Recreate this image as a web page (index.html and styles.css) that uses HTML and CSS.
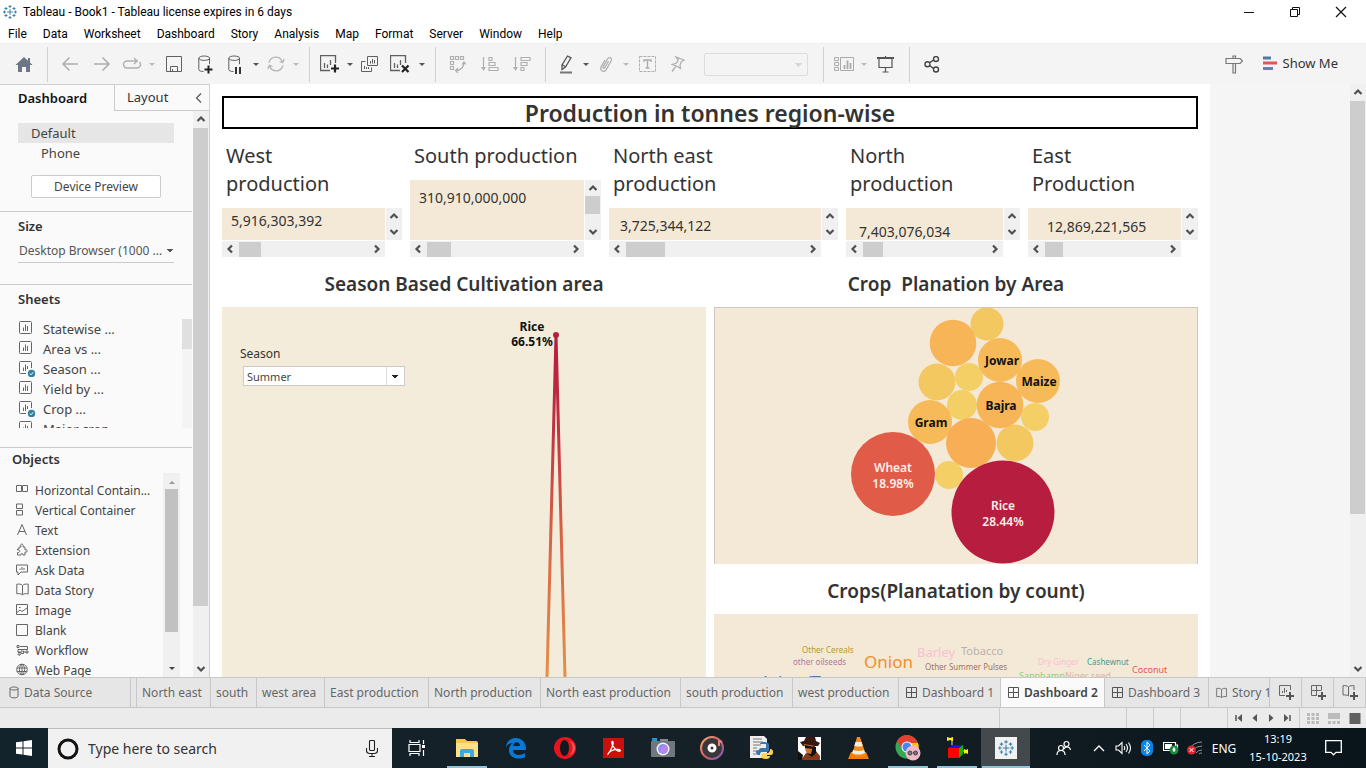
FILE: index.html
```html
<!DOCTYPE html>
<html lang="en">
<head>
<meta charset="utf-8">
<title>Tableau - Book1</title>
<link rel="stylesheet" href="styles.css">
</head>
<body>
<svg class="defs" aria-hidden="true">
  <symbol id="tableau" viewBox="0 0 16 16"><path d="M8 5v6M5 8h6M8 1v3M6.500 2.500h3M8 12v3M6.500 13.500h3M1 8h3M2.500 6.500v3M12 8h3M13.500 6.500v3M4 3v3M2.500 4.500h3M12 3v3M10.500 4.500h3M4 10v3M2.500 11.500h3M12 10v3M10.500 11.500h3" fill="none" stroke="#3f82aa"/></symbol>
  <symbol id="caret" viewBox="0 0 8 4"><path d="M0 0h8L4 4z" fill="currentColor"/></symbol>
  <symbol id="up" viewBox="0 0 10 8"><path d="M1.500 6L5 2.500 8.500 6" fill="none" stroke="#505050" stroke-width="2.200"/></symbol>
  <symbol id="down" viewBox="0 0 10 8"><path d="M1.500 2L5 5.500 8.500 2" fill="none" stroke="#505050" stroke-width="2.200"/></symbol>
  <symbol id="left" viewBox="0 0 8 10"><path d="M6 1.500L2.500 5 6 8.500" fill="none" stroke="#505050" stroke-width="2.200"/></symbol>
  <symbol id="right" viewBox="0 0 8 10"><path d="M2 1.500L5.500 5 2 8.500" fill="none" stroke="#505050" stroke-width="2.200"/></symbol>
  <symbol id="sheet" viewBox="0 0 14 14"><rect x=".5" y=".5" width="12" height="12" rx="1" fill="none" stroke="#666"/><path d="M4.500 6.500V10M6.500 3.500V10M8.500 5v5" stroke="#666" fill="none"/></symbol>
  <symbol id="sheetused" viewBox="0 0 18 17"><path d="M7 12.500H1.500a1 1 0 0 1-1-1V1.500a1 1 0 0 1 1-1h10a1 1 0 0 1 1 1V7M4.500 6.500V10M6.500 3.500V10M8.500 5v3" stroke="#666" fill="none"/><circle cx="12.500" cy="12.500" r="3.700" fill="#2f7f9f"/><path d="M10.700 12.500l1.300 1.300 2.300-2.600" fill="none" stroke="#fff"/></symbol>
  <symbol id="grid" viewBox="0 0 12 12"><path d="M.5 .5h10v10H.5zM5.500 .5v10M.5 5.500h10" fill="none" stroke="#555"/></symbol>
  <symbol id="book" viewBox="0 0 14 13"><path d="M6.500 2.500C5 .8 3 1 .8 1.200v9.600c2-.3 4-.4 5.700 1 1.700-1.400 3.700-1.300 5.700-1V1.200C10 1 8 .8 6.500 2.500zm0 0v9" fill="none" stroke="#666"/></symbol>
  <symbol id="db" viewBox="0 0 17 19"><path d="M.8 3.200v11.500c0 1 2 1.800 4.700 1.800M11.500 3.200v6" fill="none" stroke="#606060"/><ellipse cx="6.200" cy="3.200" rx="5.400" ry="2.200" fill="none" stroke="#606060"/></symbol>
  <symbol id="bars" viewBox="0 0 17 17"><path d="M10 15.500H.5V.5h15V8M4.500 8v5M7.500 9.500V13M10.500 5v5" fill="none" stroke="#606060" stroke-width="1.300"/></symbol>
</svg>

<div class="window">
  <header class="titlebar">
    <svg class="s16" aria-hidden="true"><use href="#tableau"/></svg>
    <h1>Tableau - Book1 - Tableau license expires in 6 days</h1>
    <button class="winbtn" aria-label="Minimize"><svg width="12" height="12"><path d="M1 6.500h10" stroke="#111"/></svg></button>
    <button class="winbtn" aria-label="Restore"><svg width="12" height="12"><path d="M1.500 3.500h7v7h-7zM3.500 3.500v-2h7v7h-2" fill="none" stroke="#111"/></svg></button>
    <button class="winbtn" aria-label="Close"><svg width="12" height="12"><path d="M1 1l10 10M11 1L1 11" stroke="#111" stroke-width="1.200"/></svg></button>
  </header>
  <nav class="menubar">
    <button>File</button><button>Data</button><button>Worksheet</button><button>Dashboard</button><button>Story</button><button>Analysis</button><button>Map</button><button>Format</button><button>Server</button><button>Window</button><button>Help</button>
  </nav>

  <div class="toolbar">
    <button class="tool home" aria-label="Home"><svg width="18" height="17"><path d="M9 1L.5 9H3v7h4v-5h4v5h4V9h2.500L15 6.500V2h-2v2.700z" fill="#6b7785"/></svg></button>
    <i class="sep"></i>
    <button class="tool" aria-label="Back"><svg width="18" height="16"><path d="M17 8H2M8.500 1.500L2 8l6.500 6.500" fill="none" stroke="#adadad" stroke-width="1.500"/></svg></button>
    <button class="tool" aria-label="Forward"><svg width="18" height="16"><path d="M1 8h15M9.500 1.500L16 8l-6.500 6.500" fill="none" stroke="#adadad" stroke-width="1.500"/></svg></button>
    <button class="tool narrow" aria-label="Replay"><svg width="20" height="14"><path d="M9 4H5a3.500 3.500 0 0 0 0 7h10a3.500 3.500 0 0 0 2.500-6M9 4h6M12 1l3.200 3L12 7" fill="none" stroke="#b0b0b0" stroke-width="1.400"/></svg></button>
    <button class="drop" aria-label="Replay options"><svg class="caret pale"><use href="#caret"/></svg></button>
    <button class="tool" aria-label="Save"><svg width="17" height="17"><path d="M.5 .5h15v15H.5zM4.500 15v-4.500h7V15M6.500 15v-2" fill="none" stroke="#606060"/></svg></button>
    <button class="tool" aria-label="New data source"><svg width="17" height="19"><use href="#db"/><path d="M6.500 14.500h8M10.500 10.500v8" stroke="#222" stroke-width="2"/></svg></button>
    <button class="tool narrow" aria-label="Pause updates"><svg width="17" height="19"><use href="#db"/><path d="M8 12v7M12 12v7" stroke="#333" stroke-width="2"/></svg></button>
    <button class="drop" aria-label="Update options"><svg class="caret"><use href="#caret"/></svg></button>
    <button class="tool narrow" aria-label="Refresh"><svg width="18" height="16"><path d="M2 6.500C4-.5 13-.5 15.500 6M16 9.500c-2 7-11 7-13.500.5M12.500 5.500l3.200 1.200L17.200 3M5.500 10.500L2.300 9.300.8 13" fill="none" stroke="#b5b5b5" stroke-width="1.300"/></svg></button>
    <button class="drop" aria-label="Refresh options"><svg class="caret pale"><use href="#caret"/></svg></button>
    <i class="sep"></i>
    <button class="tool narrow" aria-label="New worksheet"><svg width="20" height="19"><svg width="17" height="17"><use href="#bars"/></svg><path d="M11 13.500h8M15 9.500v8" stroke="#222" stroke-width="2.200"/></svg></button>
    <button class="drop" aria-label="New worksheet options"><svg class="caret"><use href="#caret"/></svg></button>
    <button class="tool narrow" aria-label="Duplicate"><svg width="18" height="17"><path d="M6.500 .5h10v9h-10zM4.500 5.500h-4v10h10v-4M9.500 5v2.500M11.500 3v4.500M13.500 4v3.500M3.500 10v3M5.500 11v2M7.500 11v2" fill="none" stroke="#606060"/></svg></button>
    <button class="tool" aria-label="Clear sheet"><svg width="20" height="19"><svg width="17" height="17"><use href="#bars"/></svg><path d="M12 10.500l6.500 6.500M18.500 10.500L12 17" stroke="#222" stroke-width="2.200"/></svg></button>
    <button class="drop" aria-label="Clear options"><svg class="caret"><use href="#caret"/></svg></button>
    <i class="sep"></i>
    <button class="tool" aria-label="Swap rows and columns"><svg width="18" height="18"><path d="M1.500 1.500h3v3h-3zM6.500 1.500h3v3h-3zM11.500 1.500h3v3h-3zM1.500 6.500h3v3h-3zM1.500 11.500h3v3h-3zM7 15.500c5 0 8-4 8-8M13 9.500l2-2.500 2 2.500M9 13l-2.500 2.500L9 18" fill="none" stroke="#b0b0b0" stroke-width="1.200"/></svg></button>
    <button class="tool" aria-label="Sort ascending"><svg width="18" height="16"><path d="M2.500 1v12M8 1.500h3v3H8zM8 6.500h6v3H8zM8 11.500h9v3H8z" fill="none" stroke="#b0b0b0" stroke-width="1.200"/><path d="M0 11h5l-2.500 4z" fill="#b0b0b0"/></svg></button>
    <button class="tool" aria-label="Sort descending"><svg width="18" height="16"><path d="M2.500 1v12M8 1.500h9v3H8zM8 6.500h6v3H8zM8 11.500h3v3H8z" fill="none" stroke="#b0b0b0" stroke-width="1.200"/><path d="M0 11h5l-2.500 4z" fill="#b0b0b0"/></svg></button>
    <i class="sep"></i>
    <button class="tool narrow" aria-label="Highlight"><svg width="14" height="19"><path d="M8.500 1L12 2.800 6.500 12 3 14.500V10zM3.500 10L7 12" fill="none" stroke="#555" stroke-width="1.300"/><path d="M1 17.500h12" stroke="#777" stroke-width="2"/></svg></button>
    <button class="drop" aria-label="Highlight options"><svg class="caret"><use href="#caret"/></svg></button>
    <button class="tool narrow" aria-label="Group"><svg width="14" height="17"><path d="M4 11l4.500-8c1.500-2.500 5-1 3.700 1.700l-5 9C5.500 17 .5 14.500 2 11l4-7M9.500 5L6 11.500c-.7 1.500-2.500.5-1.800-1L7 5.500" fill="none" stroke="#b0b0b0" stroke-width="1.300"/></svg></button>
    <button class="drop" aria-label="Group options"><svg class="caret pale"><use href="#caret"/></svg></button>
    <button class="tool" aria-label="Show mark labels"><svg width="18" height="17"><path d="M.5 .5h16v15H.5z" fill="none" stroke="#b0b0b0" stroke-dasharray="3 1"/><path d="M5 6V4h7v2M8.500 4v8M6.500 12h4" fill="none" stroke="#aaa" stroke-width="1.300"/></svg></button>
    <button class="tool narrow" aria-label="Fix axes"><svg width="14" height="17"><path d="M5 1l8 3-2.500 1.500L9 9l.5 3.500L5.500 10 1.500 8.500 5.500 7l1.700-3zM5.500 9.500L1 15.500" fill="none" stroke="#b0b0b0" stroke-width="1.300"/></svg></button>
    <select class="fit" aria-label="Fit" disabled><option></option></select>
    <i class="sep"></i>
    <button class="tool narrow" aria-label="Show or hide cards"><svg width="21" height="15"><path d="M.5 .5h4v3h-4zM.5 5.500h4v3h-4zM.5 10.500h4v3h-4zM6.500 .5h13v13h-13z" fill="none" stroke="#aaa"/><path d="M10.500 8v4M13.500 3.500V12M16.500 6v6" stroke="#aaa" stroke-width="1.800"/></svg></button>
    <button class="drop" aria-label="Card options"><svg class="caret pale"><use href="#caret"/></svg></button>
    <button class="tool" aria-label="Presentation mode"><svg width="18" height="17"><path d="M0 2h17" stroke="#555" stroke-width="2"/><path d="M2 3v8.500h13V3M8.500 0v2M8.500 12v4M5.500 16h6" fill="none" stroke="#555" stroke-width="1.200"/></svg></button>
    <i class="sep"></i>
    <button class="tool" aria-label="Share"><svg width="16" height="17"><path d="M5.500 7l4-3M5.500 9.500l4 3M9.500 3a2.500 2.500 0 1 0 5 0 2.500 2.500 0 0 0-5 0zM9.500 13.500a2.500 2.500 0 1 0 5 0 2.500 2.500 0 0 0-5 0zM1 8.300a2.500 2.500 0 1 0 5 0 2.500 2.500 0 0 0-5 0z" fill="none" stroke="#444" stroke-width="1.400"/></svg></button>
    <button class="tool guide" aria-label="Data guide"><svg width="19" height="19"><path d="M1 3.500h14l2.500 2.500-2.500 2.500H1zM8 8.500V18h2.500V8.500M8 3.500V1h2.500v2.500" fill="none" stroke="#777" stroke-width="1.200"/></svg></button>
    <button class="showme"><svg width="14" height="15" aria-hidden="true"><path d="M0 2h8" stroke="#4e79a7" stroke-width="3"/><path d="M0 7h14" stroke="#e15759" stroke-width="3"/><path d="M0 12.500h10" stroke="#6d7fae" stroke-width="3"/></svg>Show Me</button>
  </div>

  <main class="main">
    <aside class="side">
      <div class="sidetabs"><button class="on">Dashboard</button><button class="off">Layout <svg width="8" height="12" aria-hidden="true"><path d="M6 1.500L1.500 6 6 10.500" fill="none" stroke="#555" stroke-width="1.200"/></svg></button></div>
      <div class="sidebody">
        <div class="panels">
          <section class="devices">
            <button class="device picked">Default</button>
            <button class="device phone">Phone</button>
            <button class="preview">Device Preview</button>
          </section>
          <section class="size">
            <h2><label for="size">Size</label></h2>
            <select id="size"><option>Desktop Browser (1000 ...</option></select>
          </section>
          <section class="sheets">
            <h2>Sheets</h2>
            <div class="sheetrow">
              <ul>
                <li><svg class="sheeticon"><use href="#sheet" width="14" height="14"/></svg>Statewise ...</li>
                <li><svg class="sheeticon"><use href="#sheet" width="14" height="14"/></svg>Area vs ...</li>
                <li><svg class="sheeticon"><use href="#sheetused" width="18" height="17"/></svg>Season ...</li>
                <li><svg class="sheeticon"><use href="#sheet" width="14" height="14"/></svg>Yield by ...</li>
                <li><svg class="sheeticon"><use href="#sheetused" width="18" height="17"/></svg>Crop ...</li>
                <li><svg class="sheeticon"><use href="#sheet" width="14" height="14"/></svg>Major crop</li>
              </ul>
              <div class="thinbar"><i></i></div>
            </div>
          </section>
          <section class="objects">
            <h2>Objects</h2>
            <div class="objectrow">
              <ul>
                <li><svg><path d="M.5 2.500h5v6h-5zM6.500 2.500h5v6h-5z"/></svg>Horizontal Contain...</li>
                <li><svg><path d="M.5 1h6v4.500h-6zM.5 7.500h6V12h-6z"/></svg>Vertical Container</li>
                <li><svg><path d="M1.500 12L6 1.500 10.500 12M3 8.500h6"/></svg>Text</li>
                <li><svg><path d="M3 4h2C3.500 0 8 0 7 4h2v3c3-1.500 3 3 0 2v3H7c.5-2-2.500-2-2 0H1.500V9.500c3 .5 3-3 0-2.500V6H3z"/></svg>Extension</li>
                <li><svg><path d="M.5 2h11v7H5l-3 3V9H.5zM4 7V5.500M6 7V4M8 7V5"/></svg>Ask Data</li>
                <li><svg><use href="#book" width="14" height="13"/></svg>Data Story</li>
                <li><svg><path d="M.5 1.500h11v10H.5zM1 9.500l3-2.500 2 1.500L11 5M3 4.500h1.500"/></svg>Image</li>
                <li><svg><path d="M.5 1.500h11v11H.5z"/></svg>Blank</li>
                <li><svg><path d="M1 2.500h2v2H1zM4 3.500h7.500v3H2v3h3M5 8h2.500v2.500H5zM8 9h2M10 8h2v2h-2zM3 8v4M1.500 11L3 12.500 5 11"/></svg>Workflow</li>
                <li><svg><path d="M.7 6.500a5.300 5.300 0 1 0 10.600 0 5.300 5.300 0 0 0-10.600 0zM6 1v11M1 5h10M1 8.500h10M6 1C2.500 4 2.500 9 6 12M6 1c3.500 3 3.500 8 0 11"/></svg>Web Page</li>
              </ul>
              <div class="classicbar"><svg class="caret flip"><use href="#caret"/></svg><i></i><svg class="caret dark"><use href="#caret"/></svg></div>
            </div>
          </section>
        </div>
        <div class="vbar sidebar"><svg><use href="#up"/></svg><i></i><svg><use href="#down"/></svg></div>
      </div>
    </aside>

    <div class="canvas">
      <article class="dash">
        <h2 class="banner">Production in tonnes region-wise</h2>
        <div class="cards">
          <section class="card west"><h3>West<br>production</h3><div class="value"><p>5,916,303,392</p><div class="vbar"><svg><use href="#up"/></svg><svg><use href="#down"/></svg></div><div class="hbar"><svg><use href="#left"/></svg><i></i><svg><use href="#right"/></svg></div></div></section>
          <section class="card south"><h3>South production</h3><div class="value"><p>310,910,000,000</p><div class="vbar"><svg><use href="#up"/></svg><i></i><svg><use href="#down"/></svg></div><div class="hbar"><svg><use href="#left"/></svg><i></i><svg><use href="#right"/></svg></div></div></section>
          <section class="card northeast"><h3>North east<br>production</h3><div class="value"><p>3,725,344,122</p><div class="vbar"><svg><use href="#up"/></svg><svg><use href="#down"/></svg></div><div class="hbar"><svg><use href="#left"/></svg><i></i><svg><use href="#right"/></svg></div></div></section>
          <section class="card north"><h3>North<br>production</h3><div class="value"><p>7,403,076,034</p><div class="vbar"><svg><use href="#up"/></svg><svg><use href="#down"/></svg></div><div class="hbar"><svg><use href="#left"/></svg><i></i><svg><use href="#right"/></svg></div></div></section>
          <section class="card east"><h3>East<br>Production</h3><div class="value"><p>12,869,221,565</p><div class="vbar"><svg><use href="#up"/></svg><svg><use href="#down"/></svg></div><div class="hbar"><svg><use href="#left"/></svg><i></i><svg><use href="#right"/></svg></div></div></section>
        </div>
        <div class="charts">
          <section class="chart">
            <h3>Season Based Cultivation area</h3>
            <div class="plot season">
              <svg class="draw" viewBox="0 0 484 370" preserveAspectRatio="xMidYMin meet" role="img" aria-label="Cultivation share by crop">
                <defs><linearGradient id="heat" gradientUnits="userSpaceOnUse" x1="0" y1="28" x2="0" y2="370"><stop offset="0" stop-color="#b71d3e"/><stop offset=".25" stop-color="#bf2e42"/><stop offset=".6" stop-color="#d96548"/><stop offset="1" stop-color="#e59049"/></linearGradient></defs>
                <path d="M325 370L334 28l9 342" fill="none" stroke="url(#heat)" stroke-width="3" stroke-linejoin="round"/>
                <circle cx="334" cy="28" r="3" fill="#b71d3e"/>
                <g class="marks"><text x="310" y="24">Rice</text><text x="310" y="39">66.51%</text></g>
              </svg>
              <div class="filter"><label for="season">Season</label><select id="season"><option>Summer</option></select></div>
            </div>
          </section>
          <div class="stack">
            <section class="chart">
              <h3>Crop&nbsp; Planation by Area</h3>
              <div class="plot bubbles">
                <svg class="draw" viewBox="0 0 482 256" role="img" aria-label="Crop area bubbles">
                  <g fill="#f3cf66"><circle cx="254" cy="69" r="14"/><circle cx="247" cy="97" r="15"/><circle cx="320" cy="109" r="14"/><circle cx="234" cy="167" r="14"/></g>
                  <g fill="#f4c860"><circle cx="272" cy="16" r="16.500"/><circle cx="222" cy="74" r="18.500"/><circle cx="300" cy="135" r="18.500"/></g>
                  <g fill="#f7ba59"><circle cx="285" cy="52" r="22"/><circle cx="323" cy="73" r="22"/><circle cx="215" cy="114" r="22"/></g>
                  <g fill="#f7b557"><circle cx="238" cy="35" r="23.300"/><circle cx="285" cy="97" r="23.300"/></g>
                  <circle cx="256" cy="135" r="25" fill="#f7ae54"/>
                  <circle cx="178" cy="166" r="42" fill="#e15b49"/><circle cx="288" cy="204" r="51.500" fill="#b71d3e"/>
                  <g class="marks"><text x="287" y="57">Jowar</text><text x="324" y="78">Maize</text><text x="286" y="102">Bajra</text><text x="216" y="119">Gram</text></g>
                  <g class="marks light"><text x="178" y="164">Wheat</text><text x="178" y="180">18.98%</text><text x="288" y="202">Rice</text><text x="288" y="218">28.44%</text></g>
                </svg>
              </div>
            </section>
            <section class="chart words">
              <h3>Crops(Planatation by count)</h3>
              <div class="plot">
                <svg class="draw" viewBox="0 0 484 80" role="img" aria-label="Crop word cloud">
                  <g class="cloud"><text x="88" y="39" fill="#b6992d">Other Cereals</text><text x="79" y="51" fill="#b07aa1">other oilseeds</text><text x="150" y="54" class="big" fill="#f28e2b">Onion</text><text x="203" y="43" class="mid" fill="#fabfd2">Barley</text><text x="247" y="41" class="small" fill="#bab0ac">Tobacco</text><text x="211" y="56" fill="#9d7660">Other Summer Pulses</text><text x="324" y="51" fill="#fabfd2">Dry Ginger</text><text x="373" y="51" fill="#499894">Cashewnut</text><text x="418" y="59" class="nine" fill="#e15759">Coconut</text><text x="305" y="65" class="nine" fill="#8cd17d">Sannhamp</text><text x="351" y="65" class="nine" fill="#d7b5a6">Niger seed</text><text x="46" y="74" class="big" fill="#4e79a7">Arhar/Tur</text></g>
                </svg>
              </div>
            </section>
          </div>
        </div>
      </article>
      <div class="vbar page"><svg><use href="#up"/></svg><i></i><svg><use href="#down"/></svg></div>
    </div>
  </main>

  <nav class="tabs">
    <button class="source"><svg width="11" height="13" aria-hidden="true"><path d="M1 2.500v7.500c0 2.500 8 2.500 8 0V2.500c0-2-8-2-8 0zc0 2 8 2 8 0" fill="none" stroke="#666"/></svg>Data Source</button><i class="split"></i>
    <button>North east</button><button>south</button><button>west area</button><button>East production</button><button>North production</button><button>North east production</button><button>south production</button><button>west production</button>
    <button class="dashtab"><svg class="s12"><use href="#grid"/></svg>Dashboard 1</button>
    <button class="dashtab current"><svg class="s12"><use href="#grid"/></svg>Dashboard 2</button>
    <button class="dashtab"><svg class="s12"><use href="#grid"/></svg>Dashboard 3</button>
    <button class="dashtab"><svg class="s12"><use href="#book"/></svg>Story 1</button>
    <button class="add" aria-label="New worksheet"><svg width="17" height="17"><path d="M7 11.500H1.500v-10h11V6M4.500 7v2M6.500 4v5M8.500 6v2" fill="none" stroke="#666"/><path d="M8 12h8M12 8v8" stroke="#555" stroke-width="2"/></svg></button>
    <button class="add" aria-label="New dashboard"><svg width="17" height="17"><path d="M7 11.500H1.500v-10h10V6M6.500 1.500v10M1.500 6.500h10" fill="none" stroke="#666"/><path d="M8 12h8M12 8v8" stroke="#555" stroke-width="2"/></svg></button>
    <button class="add" aria-label="New story"><svg width="17" height="17"><path d="M6.500 3C5 1.500 3 1.500 1 1.700v9.300c2 0 4-.3 5.500 1V3C8 1.500 10 1.500 12 1.700V6" fill="none" stroke="#666"/><path d="M8 12h8M12 8v8" stroke="#555" stroke-width="2"/></svg></button>
  </nav>

  <div class="status">
    <i></i><i></i><i></i><i></i>
    <div class="pager">
      <button aria-label="First"><svg width="8" height="8"><path d="M1 1v6" stroke="#555" stroke-width="1.500"/><path d="M7 0v8L2.500 4z" fill="#555"/></svg></button>
      <button aria-label="Previous"><svg width="8" height="8"><path d="M6 0v8L1.500 4z" fill="#555"/></svg></button>
      <button aria-label="Next"><svg width="8" height="8"><path d="M2 0v8l4.500-4z" fill="#555"/></svg></button>
      <button aria-label="Last"><svg width="8" height="8"><path d="M7 1v6" stroke="#555" stroke-width="1.500"/><path d="M1 0v8l4.500-4z" fill="#555"/></svg></button>
    </div>
    <div class="views">
      <button aria-label="Sheet sorter"><svg width="12" height="11"><path d="M0 1.500h12M0 5.500h12M0 9.500h12" stroke="#bbb" stroke-width="3" stroke-dasharray="3 1.500"/></svg></button>
      <button aria-label="Filmstrip"><svg width="12" height="11"><path d="M0 0h12v6H0z" fill="#bbb"/><path d="M0 9.500h12" stroke="#bbb" stroke-width="3" stroke-dasharray="3 1.500"/></svg></button>
      <button aria-label="Tabs"><svg width="12" height="11"><path d="M.5 0h11v11H.5z" fill="#606060"/></svg></button>
    </div>
  </div>

  <footer class="taskbar">
    <button class="start" aria-label="Start"><svg width="16" height="16"><path d="M0 2.300l6.500-.9v6.100H0zM7.500 1.200L16 0v7.500H7.500zM0 8.500h6.500v6.100L0 13.700zM7.500 8.500H16V16l-8.500-1.200z" fill="#fff"/></svg></button>
    <div class="search"><svg width="22" height="22" aria-hidden="true"><circle cx="11" cy="11" r="9" fill="none" stroke="#111" stroke-width="3"/></svg><input type="text" aria-label="Search" placeholder="Type here to search"><svg width="12" height="17" aria-hidden="true"><path d="M3.500 1.500q0-1 1-1h3q1 0 1 1v8q0 1-1 1h-3q-1 0-1-1zM.5 8v2.500q0 3 3 3h5q3 0 3-3V8M6 13.500V16M3 16.500h6" fill="none" stroke="#222" stroke-width="1.100"/></svg></div>
    <button class="app first" aria-label="Task view"><svg width="18" height="16"><path d="M2 0v2.500h9V0M2 16v-2.500h9V16M1 4.500h11v7H1zM15.500 0v4M15.500 10v6" fill="none" stroke="#fff" stroke-width="1.200"/><path d="M14 5h3v3h-3z" fill="#fff"/></svg></button>
    <button class="app open" aria-label="File Explorer"><svg width="22" height="20"><path d="M0 1h9l2 2h9q2 0 2 2v14H0z" fill="#f5c64d"/><path d="M0 5h22v14H0z" fill="#ffe08a"/><path d="M4 19v-6q0-2 2-2h10q2 0 2 2v6h-4v-4H8v4z" fill="#37ace4"/></svg></button>
    <button class="app" aria-label="Edge"><svg width="22" height="22"><path d="M1 10C2-2 20-2 21 11v2H8c0 6 8 6 12 3v4C12 24 3 20 4 12c.5-3 2-5 4-6C5 6 3 7 1 10zm7-1h7c0-5-6-5-7 0z" fill="#0a79d6"/></svg></button>
    <button class="app" aria-label="Opera"><svg width="22" height="22"><circle cx="11" cy="11" r="11" fill="#e5141f"/><ellipse cx="10.500" cy="11" rx="4.500" ry="8" fill="#10191f"/><path d="M15 4c5 3 5 11 0 14 8-1 8-13 0-14z" fill="#f35457"/></svg></button>
    <button class="app" aria-label="PDF reader"><svg width="21" height="20"><path d="M0 0h21v20H0z" fill="#c9100b"/><path d="M5 16c2-2 6-10 5-12s-2 1 0 4 5 6 7 5-4-3-9 0c-3 2-3 3-3 3z" fill="none" stroke="#fff" stroke-width="1.300"/></svg></button>
    <button class="app" aria-label="Camera"><svg width="24" height="20"><path d="M1 0h5v4H1z" fill="#2196c8"/><path d="M9 1h8v4H9z" fill="#848a90"/><rect y="3" width="24" height="16" rx="1" fill="#70777d"/><circle cx="12" cy="11" r="6.500" fill="#f4f6ff"/><circle cx="12" cy="11" r="5" fill="#7f92ec"/><path d="M8.500 14c1-6 4-7 7-7q3 5-2 9z" fill="#b884ed"/></svg></button>
    <button class="app" aria-label="Music"><svg width="24" height="24"><defs><linearGradient id="ring" x2="1" y2="1"><stop stop-color="#ffad76"/><stop offset=".5" stop-color="#d45b61"/><stop offset="1" stop-color="#785dc9"/></linearGradient></defs><circle cx="12" cy="12" r="11" fill="#383739" stroke="url(#ring)" stroke-width="2"/><circle cx="12" cy="12" r="3" fill="none" stroke="#fff" stroke-width="3"/><path d="M19 10V5l3 1" fill="none" stroke="#e5857a" stroke-width="2"/></svg></button>
    <button class="app" aria-label="Python"><svg width="24" height="24"><path d="M1 0h14l3 3v19H1z" fill="#eee"/><path d="M4 3h9M4 6h10M4 9h8M4 12h4M4 15h4M4 18h4" stroke="#777"/><path d="M10 17v-3q0-2 2-2h5V8h-6q0-2 4-2 5 0 5 3v5q0 2-2 2h-5q-2 0-2 3h-2q-2-1-2-3 0-2 3-2z" fill="#3975ab"/><path d="M12 20q0-3 3-3h3q3 0 3-4 3 0 3 3 0 3-2 3h-5v1h4q0 3-4 3-5 0-5-3z" fill="#ffd54b"/></svg></button>
    <button class="app" aria-label="Detective"><svg width="23" height="23"><path d="M0 0h23v23H0z" fill="#fff"/><path d="M2 5L6 4 8 0h9l1 4 4 2-2 3H5z" fill="#36180e"/><path d="M6 7l11 2-1 8-5 2-3-4z" fill="#c97634"/><path d="M3 23l5-7 5 3 5-5 4 5v4z" fill="#873a17"/><path d="M7 8l9 2v2L7 11zM15 9l3 1v6l-4 4-6-4 5 1zM0 14l5 4-1 5H0z" fill="#111"/></svg></button>
    <button class="app" aria-label="VLC"><svg width="22" height="24"><path d="M3 16h15l3 7H0z" fill="#ef7c0b"/><path d="M9 1h3l6 18q-7 3-14 0z" fill="#f28c1c"/><path d="M7.500 6h6l1.200 4q-4 1-8.400 0zM5 14q6 2 11 0l1 3q-7 3-13 0z" fill="#eee"/></svg></button>
    <button class="app open" aria-label="Chrome"><svg width="26" height="26"><circle cx="12" cy="12" r="11.500" fill="#34a853"/><path d="M2 6C7-3 19-2 23 8H12l-5 6z" fill="#e34133"/><path d="M23 8c3 7-3 16-11 15.500L17 13 15 8z" fill="#fbc116"/><circle cx="12" cy="12" r="5.500" fill="#fff"/><circle cx="12" cy="12" r="4.500" fill="#4285f4"/><circle cx="18" cy="18" r="7.500" fill="#f2b7c9"/><circle cx="15" cy="18" r="2" fill="#777" stroke="#444"/><circle cx="20.500" cy="18" r="2" fill="#777" stroke="#444"/></svg></button>
    <button class="app open" aria-label="Blocks"><svg width="24" height="24"><path d="M3 12h11v10H3z" fill="#f00"/><path d="M3 12l4-3h11l-4 3z" fill="#1616dc"/><path d="M14 12l4-3v9l-4 4z" fill="#12b312"/><path d="M7 4v5M18 15h3" stroke="#ddd"/><path d="M2 1l3 1 3-1v4L5 4 2 5zM19 13l2 1 2-1v5l-2-1-2 1z" fill="#ffee24"/></svg></button>
    <button class="app open active" aria-label="Tableau"><svg width="22" height="22"><path d="M0 0h22v22H0z" fill="#f1f1f1"/><use href="#tableau" x="2" y="2" width="18" height="18"/></svg></button>
    <div class="tray">
      <button class="people" aria-label="People"><svg width="15" height="16"><path d="M1 15c0-6 8-6 8 0M8 9c1-3 6-3 6.500 1M2.500 8a2.500 2.500 0 1 0 5 0 2.500 2.500 0 0 0-5 0zM8 4a2.500 2.500 0 1 0 5 0 2.500 2.500 0 0 0-5 0z" fill="none" stroke="#fff" stroke-width="1.200"/></svg></button>
      <button aria-label="Hidden icons"><svg width="12" height="8"><path d="M1 7l5-5 5 5" fill="none" stroke="#fff" stroke-width="1.300"/></svg></button>
      <button aria-label="Volume"><svg width="17" height="14"><path d="M1 5h2.500L7 1.500v11L3.500 9H1zM9 5q1.500 2 0 4M11 3q3 4 0 8M13.500 1.500q4 5.500 0 11" fill="none" stroke="#fff" stroke-width="1.100"/></svg></button>
      <button aria-label="Bluetooth"><svg width="12" height="16"><rect width="12" height="16" rx="5" fill="#0a84e8"/><path d="M3 5l6 6-3 3V2l3 3-6 6" fill="none" stroke="#fff"/></svg></button>
      <button aria-label="Battery"><svg width="17" height="14"><path d="M.5 1.500h12v8H.5zM13 4h1.500v3" fill="none" stroke="#fff" stroke-width="1.200"/><path d="M2 3h7v5H2z" fill="#fff"/><circle cx="11" cy="9" r="4.500" fill="#198a3e"/><path d="M11 6q3 3 0 5-3-2 0-5z" fill="#fff"/></svg></button>
      <button aria-label="Network"><svg width="17" height="14"><path d="M2 8Q7 1 15 1M5 10Q9 5 15 5M9 12q2-3 6-3M12 13q1-1 3-1" fill="none" stroke="#8b9296"/><circle cx="4.500" cy="9" r="4.500" fill="#df2632"/><path d="M2.500 7l4 4M6.500 7l-4 4" stroke="#fff"/></svg></button>
      <button class="lang">ENG</button>
      <button class="clock">13:19<br>15-10-2023</button>
      <button class="notes" aria-label="Notifications"><svg width="17" height="16"><path d="M.7 .7h15.600v11.600H11l-2.500 2.500L6 12.300H.7z" fill="none" stroke="#fff" stroke-width="1.300"/></svg></button>
    </div>
  </footer>
</div>
</body>
</html>
```
FILE: styles.css
```css
* { box-sizing: border-box; }
html, body { height: 100%; margin: 0; }
body { font-family: "Noto Sans", sans-serif; font-size: 12px; color: #333; background: #fff; overflow: hidden; }
button { font: inherit; color: inherit; background: none; border: 0; padding: 0; margin: 0; text-align: left; white-space: nowrap; }
h1, h2, h3, p, ul { margin: 0; padding: 0; font-weight: normal; }
ul { list-style: none; }
svg { display: block; flex: none; }
select { appearance: none; border-radius: 0; }
.defs { position: absolute; width: 0; height: 0; }
.s16 { width: 16px; height: 16px; }
.s12 { width: 12px; height: 12px; }
.window { display: flex; flex-direction: column; height: 100vh; }

/* Title and menus */
.titlebar, .menubar { flex: none; display: flex; align-items: center; font-family: Roboto, "Noto Sans", sans-serif; color: #000; }
.titlebar { height: 24px; padding: 0 2px; }
.titlebar h1 { flex: 1; font-size: 12px; padding-left: 5px; }
.winbtn { width: 46px; height: 22px; display: grid; place-items: center; }
.menubar { gap: 16px; height: 19px; padding-left: 8px; }

/* Toolbar */
.toolbar { display: flex; align-items: center; height: 41px; background: #f4f4f4; border-top: 1px solid #eee; flex: none; }
.tool { width: 32px; height: 32px; display: grid; place-items: center; }
.tool.narrow { width: 28px; }
.tool.home { width: 40px; padding-left: 8px; }
.drop { width: 12px; height: 32px; display: grid; place-items: center; }
.caret { width: 6px; height: 3px; color: #555; }
.caret.pale { color: #bbb; }
.sep { width: 1px; height: 35px; background: #d0d0d0; margin: 0 6px 0 7px; }
.fit { width: 104px; height: 23px; margin: 0 8px 0 12px; border: 1px solid #d4d4d4; border-radius: 2px; background: linear-gradient(to bottom left, #ccc 50%, transparent 50%) 90px 9px / 4px 4px no-repeat, linear-gradient(to bottom right, #ccc 50%, transparent 50%) 94px 9px / 4px 4px no-repeat, #f4f4f4; }
.guide { margin-left: auto; }
.showme { display: flex; align-items: center; gap: 6px; font-size: 13px; line-height: 16px; margin: 0 28px 2px 12px; }

/* Side pane */
.main { display: flex; flex: 1; min-height: 0; }
.side { width: 210px; flex: none; display: flex; flex-direction: column; background: #fafafa; border-top: 1px solid #d0d0d0; border-right: 1px solid #d0d0d0; font-size: 13px; }
.sidetabs { display: flex; height: 26px; flex: none; line-height: 25px; }
.sidetabs .on { width: 114px; padding-left: 18px; font-weight: 600; color: #111; line-height: 24px; }
.sidetabs .off { flex: 1; display: flex; align-items: center; justify-content: space-between; padding: 0 6px 0 12px; border: 1px solid #ccc; border-width: 0 0 1px 1px; }
.sidebody { display: flex; flex: 1; min-height: 0; gap: 1px; }
.panels { flex: 1; min-width: 0; display: flex; flex-direction: column; }
.panels section { flex: none; border-bottom: 1px solid #ccc; padding-left: 18px; color: #444; }
.panels h2 { font-size: 13px; font-weight: 600; color: #333; line-height: 20px; }
.panels .devices { padding-top: 12px; height: 101px; }
.device { display: block; width: 156px; height: 20px; line-height: 20px; padding-left: 13px; }
.device.picked { background: #e6e6e6; }
.device.phone { padding-left: 23px; }
.preview { display: block; width: 130px; height: 23px; margin: 12px 0 0 13px; text-align: center; border: 1px solid #ccc; border-radius: 2px; font-size: 12px; line-height: 20px; background: #fff; }
.panels .size { padding-top: 4px; height: 73px; }
.size select { width: 156px; height: 24px; margin-top: 3px; border: 0; border-bottom: 1px solid #ccc; font: inherit; font-size: 12px; color: #555; padding: 0 0 0 1px; background: linear-gradient(to bottom left, #555 50%, transparent 50%) 148px 10px / 4px 4px no-repeat, linear-gradient(to bottom right, #555 50%, transparent 50%) 152px 10px / 4px 4px no-repeat; }
.panels .sheets { padding-top: 4px; height: 163px; }
.sheetrow { display: flex; justify-content: space-between; height: 109px; margin-top: 10px; overflow: hidden; }
.sheets li { display: flex; align-items: center; height: 20px; }
.sheeticon { width: 18px; height: 16px; margin: 0 6px 0 1px; }
.thinbar { width: 10px; background: #f4f4f4; }
.thinbar i { display: block; height: 30px; background: #e0e0e0; }
.panels .objects { flex: 1; min-height: 0; padding: 1px 0 0 12px; border-bottom: 0; overflow: hidden; display: flex; flex-direction: column; }
.objectrow { display: flex; justify-content: space-between; flex: 1; min-height: 0; padding-right: 12px; margin-top: 4px; font-size: 12px; }
.objects ul { padding-top: 7px; overflow: hidden; }
.objects li { display: flex; align-items: center; height: 20px; padding-left: 4px; gap: 5px; white-space: nowrap; }
.objects li svg { width: 14px; height: 14px; fill: none; stroke: #666; }
.classicbar { width: 17px; background: #f0f0f0; display: flex; flex-direction: column; align-items: center; padding: 8px 0 7px; }
.classicbar i { width: 13px; flex: 0 1 143px; margin: 5px 0 auto; background: #c1c1c1; }
.caret.flip { transform: rotate(180deg); color: #999; }
.caret.dark { color: #444; }

/* Scroll bars */
.vbar { width: 16px; background: #f0f0f0; display: flex; flex-direction: column; justify-content: space-between; align-items: center; padding: 4px 0; }
.vbar svg { width: 10px; height: 8px; }
.vbar i { width: 15px; align-self: flex-start; background: #cdcdcd; }
.hbar { height: 16px; background: #f0f0f0; display: flex; align-items: center; padding: 0 4px; }
.hbar svg { width: 8px; height: 10px; }
.hbar svg:last-child { margin-left: auto; }
.hbar i { height: 15px; margin-left: 5px; background: #cdcdcd; }
.sidebar i { flex: 0 1 478px; margin: 5px 0 auto; }
.page i { flex: 0 1 413px; margin: 5px 0 auto; }

/* Dashboard */
.canvas { display: flex; flex: 1; min-width: 0; justify-content: space-between; background: #f5f5f5; }
.dash { flex: 0 1 1000px; min-width: 0; background: #fff; padding: 12px 12px 0; display: flex; flex-direction: column; overflow: hidden; }
.banner { flex: none; height: 33px; border: 2px solid #000; text-align: center; font-size: 23px; line-height: 30px; font-weight: 600; }
.cards { flex: none; display: grid; grid-template: 100% / 180fr 191fr 229fr 174fr 170fr; gap: 8px; height: 115px; margin-top: 13px; }
.card { display: flex; flex-direction: column; min-height: 0; }
.card h3 { font-size: 20px; line-height: 28px; padding: 0 0 10px 4px; white-space: nowrap; }
.value { flex: 1; display: grid; grid-template: minmax(0, 1fr) 16px / 1fr 16px; gap: 1px; min-height: 0; }
.value p { background: #f4e9d7; font-size: 14px; line-height: 18px; padding: 4px 0 0 9px; overflow: hidden; }
.south p { padding-top: 9px; }
.northeast p { padding: 9px 0 0 11px; }
.north p { padding: 15px 0 0 13px; }
.east p { padding: 10px 0 0 19px; }
.west .hbar i { width: 22px; }
.south .hbar i { width: 24px; }
.northeast .hbar i { width: 39px; }
.north .hbar i { width: 20px; }
.east .hbar i { width: 18px; }
.south .vbar i { height: 18px; margin: 4px 0 auto; }
.charts { flex: 1; min-height: 0; display: grid; grid-template-columns: 1fr 1fr; gap: 8px; }
.chart { display: flex; flex-direction: column; min-height: 0; }
.chart h3 { flex: none; text-align: center; font-size: 19px; font-weight: 600; line-height: 28px; padding: 13px 0 9px; }
.plot { flex: 1; min-height: 0; background: #f4e9d7; overflow: hidden; }
.season { position: relative; background: #f3ecda; }
.draw { width: 100%; height: auto; }
.bubbles { flex: none; border: 1px solid #cdc7bd; border-bottom: 0; }
.stack { display: flex; flex-direction: column; min-height: 0; }
.words { flex: 1; }
.marks text { font-size: 12px; font-weight: 700; text-anchor: middle; fill: #111; }
.marks.light text { fill: #fff0ec; font-weight: 600; }
.cloud text { font-size: 8px; }
.cloud .nine { font-size: 9px; }
.cloud .small { font-size: 11px; }
.cloud .mid { font-size: 13px; }
.cloud .big { font-size: 17px; }
.filter { position: absolute; left: 18px; top: 38px; display: grid; gap: 3px; }
.filter label { font-size: 12px; line-height: 18px; }
.filter select { width: 162px; height: 20px; margin-left: 3px; border: 1px solid #ccc; font: inherit; font-size: 11px; color: #444; padding: 0 3px; background: linear-gradient(to bottom left, #222 50%, transparent 50%) 147px 8px / 4px 4px no-repeat, linear-gradient(to bottom right, #222 50%, transparent 50%) 151px 8px / 4px 4px no-repeat, linear-gradient(#ddd, #ddd) 142px 0 / 1px 20px no-repeat, #fff; }

/* Sheet tabs */
.tabs { flex: none; height: 31px; display: grid; grid-template-columns: 131fr 6fr 74fr 46fr 68fr 104fr 112fr 140fr 112fr 106fr 102fr 104fr 104fr 61fr 32fr 32fr 32fr; background: #e6e6e6; border: 1px solid #c8c8c8; border-width: 1px 0; font-size: 12px; color: #666; }
.tabs button { display: flex; align-items: center; gap: 4px; min-width: 0; overflow: hidden; padding-left: 5px; border-right: 1px solid #c8c8c8; }
.tabs .source { padding-left: 9px; }
.tabs .dashtab { padding-left: 7px; }
.tabs .split { border-right: 1px solid #c8c8c8; }
.tabs .current { background: #fafafa; font-weight: 600; color: #444; }
.tabs .add { padding-left: 8px; }

/* Status strip */
.status { flex: none; height: 20px; display: flex; justify-content: flex-end; background: #ebebeb; }
.status i { width: 27px; border-left: 1px solid #ccc; }
.status i:first-child { width: 127px; }
.status i:nth-child(4) { width: 47px; }
.pager { width: 72px; display: flex; align-items: center; gap: 8px; padding-left: 7px; border-left: 1px solid #ccc; }
.status .views { width: 67px; display: flex; align-items: center; gap: 9px; padding-left: 7px; border-left: 1px solid #ccc; }

/* Taskbar */
.taskbar { flex: none; height: 40px; display: flex; background: linear-gradient(90deg, #13232b, #151f26 60%, #0a151b); color: #fff; }
.start { width: 48px; display: grid; place-items: center; }
.search { width: 344px; display: flex; align-items: center; padding: 0 14px 0 9px; background: #f1f1f1; border-top: 1px solid #bbb; }
.search input { flex: 1; min-width: 0; border: 0; background: none; font: inherit; font-size: 14px; padding: 0 0 0 9px; }
.search input::placeholder { color: #333; opacity: 1; }
.app { width: 49px; flex: none; display: grid; place-items: center; }
.app.first { width: 50px; }
.app.open { background: linear-gradient(#8fc3d8, #8fc3d8) 50% 100% / 40px 2px no-repeat; }
.app.active { background: linear-gradient(#8fc3d8, #8fc3d8) 50% 100% / 48px 2px no-repeat, #43494c; }
.tray { margin-left: auto; display: flex; }
.tray button { width: 24px; display: grid; place-items: center; }
.tray .people { width: 48px; }
.tray .lang { width: 34px; }
.tray .clock { width: 74px; text-align: center; font-size: 11px; line-height: 18px; align-content: center; }
.tray .notes { width: 36px; margin-right: 15px; }
```
